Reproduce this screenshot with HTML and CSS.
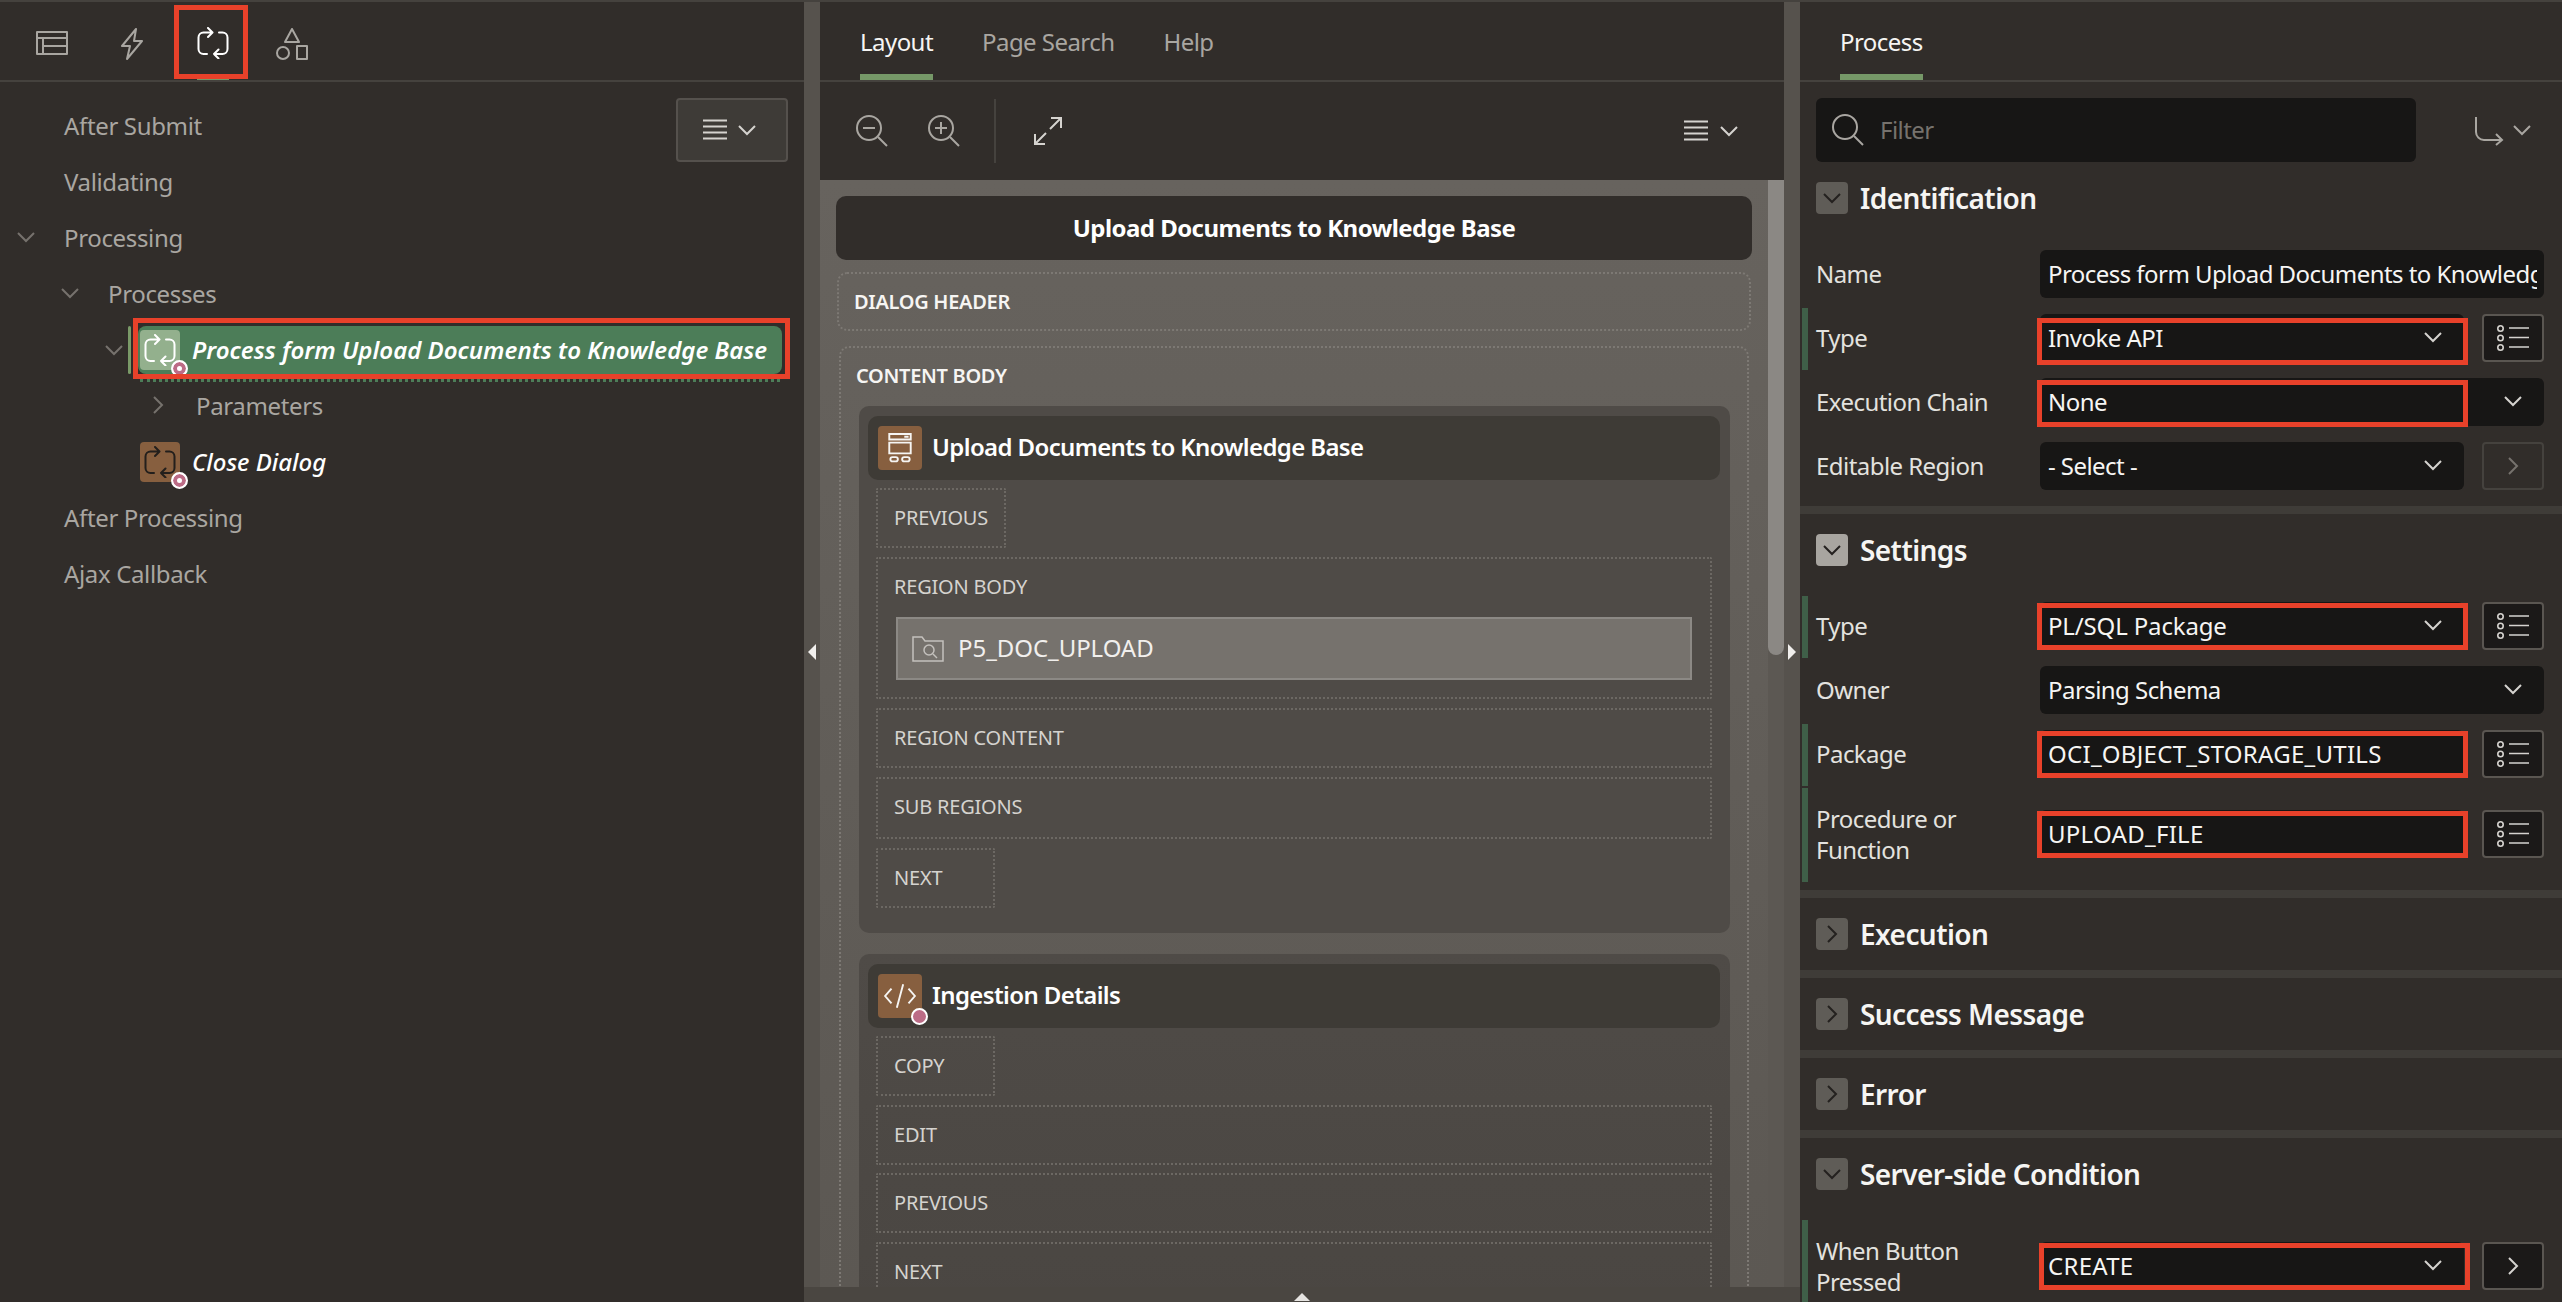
FILE: index.html
```html
<!DOCTYPE html>
<html lang="en">
<head>
<meta charset="utf-8">
<title>Page Designer</title>
<link rel="stylesheet" href="styles.css">
</head>
<body>
<svg class="defs" width="0" height="0" aria-hidden="true">
  <symbol id="loop" viewBox="0 0 32 32"><path d="M15 5.500H6.500A5 5 0 0 0 1.500 10.500V22a5 5 0 0 0 5 5H10M11 1 15.500 5.500 11 10M17 27h8.500a5 5 0 0 0 5-5V10.500a5 5 0 0 0-5-5H22M21.500 22.500 17 27 21.500 31.500" fill="none" stroke="currentColor" stroke-width="2" stroke-linecap="round" stroke-linejoin="round"/></symbol>
  <symbol id="chev-d" viewBox="0 0 20 12"><path d="M2 2l8 8 8-8" fill="none" stroke="currentColor" stroke-width="2"/></symbol>
  <symbol id="chev-r" viewBox="0 0 12 20"><path d="M2 2l8 8-8 8" fill="none" stroke="currentColor" stroke-width="2"/></symbol>
  <symbol id="menu" viewBox="0 0 24 22"><path d="M0 1.500h24M0 7.500h24M0 13.500h24M0 19.500h24" fill="none" stroke="currentColor" stroke-width="2"/></symbol>
  <symbol id="list" viewBox="0 0 32 26"><g fill="none" stroke="currentColor" stroke-width="1.600"><circle cx="3.500" cy="3.500" r="2.700"/><circle cx="3.500" cy="13" r="2.700"/><circle cx="3.500" cy="22.500" r="2.700"/><path d="M12 3h20M12 12.500h20M12 22h20"/></g></symbol>
</svg>

<main class="app">
  <section class="panel left-panel">
    <nav class="tabs icon-tabs">
      <span class="icon-tab"><svg class="ic-table" viewBox="0 0 32 24"><path d="M1 1h30v22H1zM1 7h30M7 7v16M7 15h24" fill="none" stroke="currentColor" stroke-width="2" stroke-linejoin="round"/></svg></span>
      <span class="icon-tab"><svg class="ic-bolt" viewBox="0 0 24 32"><path d="M16 1 2 18h8L7 31l15-18h-8z" fill="none" stroke="currentColor" stroke-width="2" stroke-linejoin="round"/></svg></span>
      <span class="icon-tab is-active mark-tab"><svg class="ic-loop"><use href="#loop"/></svg></span>
      <span class="icon-tab"><svg class="ic-shapes" viewBox="0 0 32 32"><path d="M16 1l7 13H9zM21 18h10v13H21z" fill="none" stroke="currentColor" stroke-width="2" stroke-linejoin="round"/><circle cx="7" cy="25" r="6" fill="none" stroke="currentColor" stroke-width="2"/></svg></span>
    </nav>
    <div class="tree-wrap">
      <button class="menu-btn"><svg class="ic-menu"><use href="#menu"/></svg><svg class="ic-chev"><use href="#chev-d"/></svg></button>
      <ul class="tree">
        <li class="node lvl0"><span class="twist"></span>After Submit</li>
        <li class="node lvl0"><span class="twist"></span>Validating</li>
        <li class="node lvl0"><svg class="twist ic-chev dim"><use href="#chev-d"/></svg>Processing</li>
        <li class="node lvl1"><svg class="twist ic-chev dim"><use href="#chev-d"/></svg>Processes</li>
        <li class="node lvl2">
          <svg class="twist ic-chev dim"><use href="#chev-d"/></svg>
          <i class="sel-bar"></i>
          <span class="sel-row">
            <span class="proc-icon proc-green"><svg><use href="#loop"/></svg><i class="badge"></i></span>
            <em class="proc-name">Process form Upload Documents to Knowledge Base</em>
          </span>
        </li>
        <li class="node lvl3"><svg class="twist ic-chev-r dim"><use href="#chev-r"/></svg>Parameters</li>
        <li class="node lvl2b">
          <span class="proc-icon proc-brown"><svg><use href="#loop"/></svg><i class="badge"></i></span>
          <em class="proc-name">Close Dialog</em>
        </li>
        <li class="node lvl0"><span class="twist"></span>After Processing</li>
        <li class="node lvl0"><span class="twist"></span>Ajax Callback</li>
      </ul>
    </div>
  </section>

  <div class="splitter"><i class="tri tri-left"></i></div>

  <section class="panel mid-panel">
    <nav class="tabs text-tabs">
      <span class="tab is-active">Layout</span>
      <span class="tab">Page Search</span>
      <span class="tab">Help</span>
    </nav>
    <div class="toolbar">
      <svg class="ic-zoom" viewBox="0 0 32 32"><g fill="none" stroke="currentColor" stroke-width="2"><circle cx="13" cy="13" r="12"/><path d="M7 13h12M22 22l9 9"/></g></svg>
      <svg class="ic-zoom" viewBox="0 0 32 32"><g fill="none" stroke="currentColor" stroke-width="2"><circle cx="13" cy="13" r="12"/><path d="M7 13h12M13 7v12M22 22l9 9"/></g></svg>
      <span class="tool-sep"></span>
      <svg class="ic-expand" viewBox="0 0 28 28"><path d="M17 1h10v10M27 1 16 12M11 27H1V17M1 27l11-11" fill="none" stroke="currentColor" stroke-width="2"/></svg>
      <span class="tool-menu"><svg class="ic-menu"><use href="#menu"/></svg><svg class="ic-chev"><use href="#chev-d"/></svg></span>
    </div>
    <div class="canvas">
      <div class="canvas-scroll">
        <div class="page-title">Upload Documents to Knowledge Base</div>
        <div class="dlg-header">DIALOG HEADER</div>
        <div class="content-body">
          <div class="cb-label">CONTENT BODY</div>
          <article class="region">
            <header class="region-head">
              <span class="reg-icon"><svg viewBox="0 0 24 28"><g fill="none" stroke="currentColor" stroke-width="1.800"><path d="M2 1h20v5H2zM2 9h20v10H2zM16 3.500h4"/><rect x="3" y="22.500" width="7" height="4" rx="2"/><rect x="14" y="22.500" width="7" height="4" rx="2"/></g></svg></span>
              <span>Upload Documents to Knowledge Base</span>
            </header>
            <div class="slots">
              <div class="slot slot-prev">PREVIOUS</div>
              <div class="slot slot-body">
                <div class="slot-body-label">REGION BODY</div>
                <div class="item">
                  <svg class="ic-file" viewBox="0 0 32 26"><g fill="none" stroke="currentColor" stroke-width="1.500"><path d="M1 25V1h9l3 4h18v20z"/><circle cx="17" cy="14" r="5"/><path d="M21 18l4 4"/></g></svg>
                  <span>P5_DOC_UPLOAD</span>
                </div>
              </div>
              <div class="slot">REGION CONTENT</div>
              <div class="slot slot-sub">SUB REGIONS</div>
              <div class="slot slot-next">NEXT</div>
            </div>
          </article>
          <article class="region region-second">
            <header class="region-head">
              <span class="reg-icon reg-icon-code"><svg viewBox="0 0 32 24"><path d="M8 5 2 12l6 7M24 5l6 7-6 7M19 1l-6 22" fill="none" stroke="currentColor" stroke-width="1.800"/></svg><i class="badge badge-plain"></i></span>
              <span>Ingestion Details</span>
            </header>
            <div class="slots slots-tight">
              <div class="slot slot-next">COPY</div>
              <div class="slot">EDIT</div>
              <div class="slot">PREVIOUS</div>
              <div class="slot">NEXT</div>
            </div>
          </article>
        </div>
      </div>
      <div class="scrollbar"><span class="thumb"></span></div>
    </div>
  </section>

  <div class="splitter"><i class="tri tri-right"></i></div>

  <section class="panel right-panel">
    <nav class="tabs text-tabs right-tabs">
      <span class="tab is-active">Process</span>
    </nav>
    <div class="filter-row">
      <div class="filter">
        <svg class="ic-search" viewBox="0 0 32 32"><g fill="none" stroke="currentColor" stroke-width="2"><circle cx="13" cy="13" r="12"/><path d="M22 22l9 9"/></g></svg>
        <span>Filter</span>
      </div>
      <span class="goto">
        <svg class="ic-goto" viewBox="0 0 30 30"><path d="M2 1v15a8 8 0 0 0 8 8h18M22 18l6 6-6 5" fill="none" stroke="currentColor" stroke-width="2"/></svg>
        <svg class="ic-chev"><use href="#chev-d"/></svg>
      </span>
    </div>

    <section class="group group-first">
      <h2 class="group-head"><span class="toggle"><svg class="ic-chev"><use href="#chev-d"/></svg></span>Identification</h2>
      <div class="prop"><label>Name</label><div class="field wide clip"><span class="clip-text">Process form Upload Documents to Knowledge Base</span></div></div>
      <div class="prop req"><label>Type</label><div class="field mark-a">Invoke API<svg class="ic-chev"><use href="#chev-d"/></svg></div><span class="side"><svg class="ic-list"><use href="#list"/></svg></span></div>
      <div class="prop"><label>Execution Chain</label><div class="field wide mark-c">None<svg class="ic-chev"><use href="#chev-d"/></svg></div></div>
      <div class="prop"><label>Editable Region</label><div class="field">- Select -<svg class="ic-chev"><use href="#chev-d"/></svg></div><span class="side side-off"><svg class="ic-chev-r"><use href="#chev-r"/></svg></span></div>
    </section>

    <section class="group">
      <h2 class="group-head"><span class="toggle toggle-hot"><svg class="ic-chev"><use href="#chev-d"/></svg></span>Settings</h2>
      <div class="prop req"><label>Type</label><div class="field mark-b mixed">PL/SQL Package<svg class="ic-chev"><use href="#chev-d"/></svg></div><span class="side"><svg class="ic-list"><use href="#list"/></svg></span></div>
      <div class="prop"><label>Owner</label><div class="field wide">Parsing Schema<svg class="ic-chev"><use href="#chev-d"/></svg></div></div>
      <div class="prop req"><label>Package</label><div class="field mark-b caps">OCI_OBJECT_STORAGE_UTILS</div><span class="side"><svg class="ic-list"><use href="#list"/></svg></span></div>
      <div class="prop req tall"><label>Procedure or Function</label><div class="field mark-b caps">UPLOAD_FILE</div><span class="side"><svg class="ic-list"><use href="#list"/></svg></span></div>
    </section>

    <section class="group collapsed"><h2 class="group-head"><span class="toggle"><svg class="ic-chev-r"><use href="#chev-r"/></svg></span>Execution</h2></section>
    <section class="group collapsed"><h2 class="group-head"><span class="toggle"><svg class="ic-chev-r"><use href="#chev-r"/></svg></span>Success Message</h2></section>
    <section class="group collapsed"><h2 class="group-head"><span class="toggle"><svg class="ic-chev-r"><use href="#chev-r"/></svg></span>Error</h2></section>

    <section class="group">
      <h2 class="group-head"><span class="toggle"><svg class="ic-chev"><use href="#chev-d"/></svg></span>Server-side Condition</h2>
      <div class="prop req tall"><label>When Button Pressed</label><div class="field mark-d caps">CREATE<svg class="ic-chev"><use href="#chev-d"/></svg></div><span class="side"><svg class="ic-chev-r"><use href="#chev-r"/></svg></span></div>
    </section>
  </section>

  <div class="hsplit"><i class="tri tri-up"></i></div>
</main>
</body>
</html>
```

FILE: styles.css
```css
*, *::before, *::after { box-sizing: border-box; }
html, body { margin: 0; height: 100%; }
body {
  background: #312d2a;
  color: #f1efed;
  font-family: "Noto Sans", "Open Sans", sans-serif;
  font-size: 24px;
  letter-spacing: -0.55px;
  overflow: hidden;
}
.defs { position: absolute; }

.app {
  display: grid;
  grid-template-columns: 804px 16px 964px 16px 762px;
  grid-template-rows: 1285px 15px;
  height: 1302px;
  border-top: 2px solid #45423e;
}
.panel { background: #312d2a; overflow: hidden; min-width: 0; }
.left-panel { grid-column: 1; grid-row: 1 / 3; }
.mid-panel { grid-column: 3; grid-row: 1; display: flex; flex-direction: column; }
.right-panel { grid-column: 5; grid-row: 1 / 3; }

.splitter {
  background: #56524d;
  grid-row: 1;
  display: flex;
  align-items: flex-start;
  justify-content: center;
  padding-top: 642px;
}
.hsplit {
  grid-column: 2 / 5;
  grid-row: 2;
  background: #4a4641;
  display: flex;
  justify-content: center;
  align-items: flex-end;
  padding-bottom: 1px;
}
.tri { display: block; width: 0; height: 0; border-style: solid; border-color: transparent; }
.tri-left { border-width: 8px 8px 8px 0; border-right-color: #f1efed; }
.tri-right { border-width: 8px 0 8px 8px; border-left-color: #f1efed; }
.tri-up { border-width: 0 8px 8px; border-bottom-color: #e6e4e1; }

/* tabs */
.tabs {
  height: 80px;
  border-bottom: 2px solid #45423e;
  display: flex;
  flex: none;
}
.icon-tabs { padding-left: 36px; }
.icon-tab {
  width: 80px;
  height: 78px;
  color: #a9a6a1;
  position: relative;
  display: flex;
  align-items: center;
}
.icon-tab:nth-child(1) { width: 84px; }
.icon-tab:nth-child(2) { width: 77px; }
.icon-tab:nth-child(3) { width: 79px; }
.ic-table { width: 32px; height: 24px; margin-top: 4px; }
.ic-bolt { width: 24px; height: 32px; margin-top: 6px; }
.ic-loop { width: 32px; height: 32px; color: #fff; margin-top: 4px; }
.ic-shapes { width: 32px; height: 32px; margin-top: 6px; }
.is-active.icon-tab::before {
  content: "";
  position: absolute;
  left: 0;
  width: 32px;
  bottom: 0;
  height: 2px;
  background: #769868;
}
.mark-tab::after {
  content: "";
  position: absolute;
  left: -23px;
  width: 74px;
  top: 3px;
  height: 74px;
  border: 5px solid #e8412a;
}

.text-tabs { padding-left: 40px; gap: 49px; color: #a9a6a1; }
.right-tabs { padding-left: 40px; }
.tab {
  height: 78px;
  line-height: 80px;
  position: relative;
}
.tab.is-active { color: #f6f5f3; }
.tab.is-active::after {
  content: "";
  position: absolute;
  left: 0;
  right: 0;
  bottom: 0;
  height: 6px;
  background: #769868;
}

/* tree */
.tree-wrap { position: relative; }
.menu-btn {
  position: absolute;
  top: 16px;
  right: 16px;
  width: 112px;
  height: 64px;
  background: #3e3b37;
  border: 2px solid #55514d;
  border-radius: 4px;
  color: #d5d3cf;
  display: flex;
  align-items: center;
  justify-content: center;
  gap: 10px;
  padding: 0 4px 0 0;
}
.ic-menu { width: 24px; height: 22px; }
.ic-chev { width: 20px; height: 12px; }
.ic-chev-r { width: 12px; height: 20px; }
.tree { list-style: none; margin: 0; padding: 16px 0 0; letter-spacing: -0.35px; }
.node {
  height: 56px;
  display: flex;
  align-items: center;
  color: #a9a6a1;
  white-space: nowrap;
  padding-bottom: 2px;
}
.twist { flex: none; width: 20px; height: 12px; margin-right: 28px; }
.dim { color: #76726d; }
.lvl0 { padding-left: 16px; }
.lvl1 { padding-left: 60px; }
.lvl2 { padding-left: 104px; padding-bottom: 0; }
.lvl2 .twist { margin-right: 4px; }
.lvl3 { padding-left: 152px; }
.lvl3 .twist { width: 12px; height: 20px; margin-right: 32px; }
.lvl2b { padding-left: 140px; padding-bottom: 0; }
.sel-bar {
  flex: none;
  width: 3px;
  height: 48px;
  margin-right: 7px;
  background: #7a9a68;
  border-radius: 2px;
}
.sel-row {
  position: relative;
  width: 644px;
  height: 48px;
  background: #4c7d58;
  border-radius: 8px;
  display: flex;
  align-items: center;
  padding-left: 2px;
  color: #fff;
}
.sel-row::before {
  content: "";
  position: absolute;
  left: 2px;
  right: 2px;
  bottom: -8px;
  border-bottom: 3px dotted #4c7d58;
}
.sel-row::after {
  content: "";
  position: absolute;
  left: -5px;
  right: -8px;
  top: -8px;
  bottom: -5px;
  border: 5px solid #e8412a;
}
.proc-name {
  color: #fff;
  font-style: italic;
  font-weight: 600;
  margin-left: 12px;
  letter-spacing: 0;
  padding-bottom: 2px;
}
.lvl2b .proc-name { font-weight: 500; }
.proc-icon {
  flex: none;
  position: relative;
  width: 40px;
  height: 40px;
  border-radius: 4px;
  display: flex;
  align-items: center;
  justify-content: center;
}
.proc-icon svg { width: 32px; height: 32px; }
.proc-green { background: #93b08d; color: #fff; }
.proc-brown { background: #875f3f; color: #231f1c; }
.badge {
  position: absolute;
  right: -8px;
  bottom: -7px;
  width: 17px;
  height: 17px;
  border-radius: 50%;
  background: #fff;
  border: 2px solid #fff;
  box-shadow: inset 0 0 0 4px #bc6c86;
}
.badge-plain { background: #bc6c86; box-shadow: none; right: -6px; bottom: -7px; }

/* toolbar */
.toolbar {
  flex: none;
  height: 98px;
  display: flex;
  align-items: center;
  padding: 0 45px 0 36px;
  color: #a9a6a1;
}
.ic-zoom { width: 32px; height: 32px; margin-right: 40px; }
.tool-sep { width: 2px; height: 64px; background: #45423e; margin: 0 38px 0 -6px; }
.ic-expand { width: 28px; height: 28px; color: #d5d3cf; }
.tool-menu { margin-left: auto; display: flex; align-items: center; gap: 11px; color: #d5d3cf; }

/* canvas */
.canvas {
  flex: 1;
  min-height: 0;
  display: flex;
  background: linear-gradient(#67635e, #5c5853);
  overflow: hidden;
}
.canvas-scroll { flex: 1; min-width: 0; padding: 16px 16px 0; }
.scrollbar { flex: none; width: 16px; background: #5c5853; }
.thumb { display: block; height: 475px; background: #8b8884; border-radius: 0 0 8px 8px; }
.page-title {
  height: 64px;
  background: #312d2a;
  border-radius: 10px;
  display: flex;
  align-items: center;
  justify-content: center;
  font-weight: 700;
  color: #fff;
  padding-bottom: 2px;
}
.dlg-header, .cb-label {
  font-size: 20px;
  font-weight: 600;
  color: #f6f5f3;
  letter-spacing: -0.3px;
}
.dlg-header {
  margin: 12px 1px 0;
  height: 59px;
  border: 2px dotted #7d7974;
  border-radius: 10px;
  padding-left: 15px;
  display: flex;
  align-items: center;
}
.content-body {
  margin: 15px 3px 0;
  border: 2px dotted #7d7974;
  border-bottom: 0;
  border-radius: 10px 10px 0 0;
  padding: 14px 17px 0 18px;
}
.cb-label { height: 28px; line-height: 28px; margin-left: -3px; margin-bottom: 16px; }
.region { background: #4f4b47; border-radius: 10px; padding: 10px 10px 25px 9px; }
.region-second { margin-top: 21px; background: linear-gradient(#4f4b47, #4a4642); }
.region-head {
  height: 64px;
  background: #3e3b36;
  border-radius: 10px;
  display: flex;
  align-items: center;
  gap: 10px;
  padding-left: 10px;
  font-weight: 600;
  color: #fff;
  letter-spacing: -0.62px;
}
.region-head > span:last-child { padding-bottom: 3px; }
.reg-icon {
  position: relative;
  flex: none;
  width: 44px;
  height: 44px;
  background: #875f3f;
  border-radius: 4px;
  display: flex;
  align-items: center;
  justify-content: center;
}
.reg-icon svg { width: 28px; height: 30px; color: #f6f5f3; }
.reg-icon-code svg { width: 34px; height: 26px; }
.slots { display: flex; flex-direction: column; gap: 9px; margin: 8px 8px 0; }
.slots-tight { gap: 8.500px; }
.slot {
  height: 60px;
  border: 2px dotted #6c6863;
  padding-left: 16px;
  padding-bottom: 1px;
  display: flex;
  align-items: center;
  font-size: 20px;
  letter-spacing: -0.2px;
  color: #d5d3cf;
  border-radius: 2px;
}
.slot-prev { width: 130px; }
.slot-next { width: 119px; }
.slot-sub { height: 62px; padding-bottom: 3px; }
.slot-body { height: 142px; display: block; padding: 0 18px 0 18px; }
.slot-body-label { height: 56px; line-height: 56px; margin-left: -2px; margin-bottom: 2px; }
.item {
  height: 63px;
  background: #76726d;
  border: 2px solid #8c8985;
  display: flex;
  align-items: center;
  gap: 14px;
  padding-left: 14px;
  font-size: 24px;
  letter-spacing: -0.05px;
  color: #f1efed;
}
.item span { padding-bottom: 3px; }
.ic-file { width: 32px; height: 26px; color: #c4c1bd; }

/* right */
.filter-row { display: flex; align-items: center; padding: 16px 16px 0; }
.filter {
  width: 600px;
  height: 64px;
  background: #171615;
  border-radius: 6px;
  display: flex;
  align-items: center;
  gap: 16px;
  padding-left: 16px;
  color: #76726d;
}
.filter span { padding-bottom: 2px; }
.ic-search { width: 32px; height: 32px; color: #a9a6a1; }
.goto { margin-left: 58px; display: flex; align-items: center; gap: 8px; color: #a9a6a1; }
.ic-goto { width: 30px; height: 30px; margin-top: 2px; }
.group { border-top: 8px solid #3f3c38; padding: 20px 0 8px; }
.group-first { border-top: 0; }
.collapsed { padding-bottom: 20px; }
.group-head {
  margin: 0;
  height: 32px;
  padding-left: 16px;
  display: flex;
  align-items: center;
  gap: 12px;
  font-size: 28px;
  font-weight: 600;
  color: #f6f5f3;
  letter-spacing: -0.58px;
}
.toggle {
  width: 32px;
  height: 32px;
  background: #5f5c57;
  border-radius: 4px;
  display: flex;
  align-items: center;
  justify-content: center;
  color: #24211f;
}
.toggle-hot { background: #a8a5a0; }
.group-head + .prop { margin-top: 28px; }
.group-head + .prop.req { margin-top: 30px; }
.prop {
  height: 64px;
  margin-left: 2px;
  border-left: 6px solid transparent;
  padding: 8px 18px 8px 8px;
  display: flex;
  align-items: center;
  color: #e3e2df;
}
.prop.req {
  height: 62px;
  margin-top: 2px;
  padding-top: 6px;
  border-left-color: #3f5f48;
}
.prop.tall { height: 94px; }
.prop label { width: 224px; flex: none; line-height: 31.500px; }
.field {
  position: relative;
  width: 424px;
  height: 48px;
  background: #171615;
  border-radius: 6px;
  display: flex;
  align-items: center;
  padding: 0 21px 2px 8px;
  color: #f6f5f3;
  white-space: nowrap;
}
.caps { letter-spacing: 0.28px; }
.mixed { letter-spacing: -0.15px; }
.field .ic-chev { margin-left: auto; color: #d5d3cf; }
.field.wide { width: 504px; }
.clip { padding-right: 7px; }
.clip-text { display: block; overflow: hidden; flex: 1; min-width: 0; }
.side {
  width: 62px;
  height: 48px;
  margin-left: 18px;
  border: 2px solid #5a5651;
  border-radius: 4px;
  background: #1b1918;
  display: flex;
  align-items: center;
  justify-content: center;
  color: #d5d3cf;
}
.side-off { background: transparent; border-color: #45423e; color: #76726d; }
.ic-list { width: 32px; height: 26px; }
.mark-a::after, .mark-b::after, .mark-c::after, .mark-d::after {
  content: "";
  position: absolute;
  border: 5px solid #e8412a;
}
.mark-a::after { left: -3px; width: 431px; top: 4px; height: 47px; }
.mark-b::after { left: -3px; width: 431px; top: 1px; height: 47px; }
.mark-c::after { left: -3px; width: 431px; top: 2px; height: 47px; }
.mark-d::after { left: -1px; width: 431px; top: 1px; height: 47px; }
```
